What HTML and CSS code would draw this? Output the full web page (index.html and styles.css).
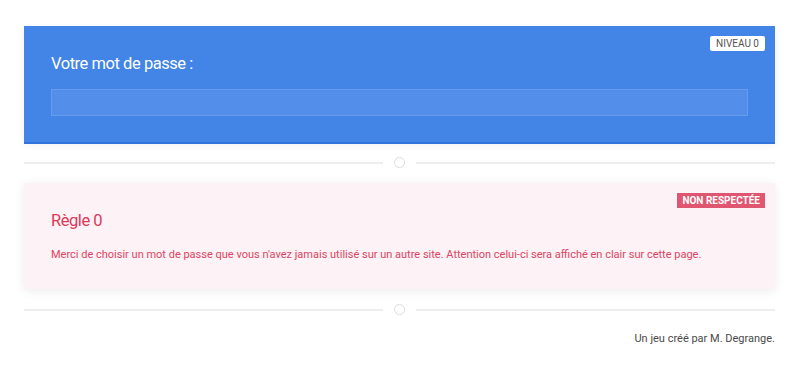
FILE: index.html
```html
<!DOCTYPE html>
<html lang="fr">
<head>
  <meta charset="UTF-8" />
  <meta name="viewport" content="width=device-width, initial-scale=1.0" />
  <title>Le jeu du mot de passe</title>
  <link rel="stylesheet" href="styles.css">
</head>
<body>

  <div class="page">
    <div class="carte carte-mdp">
      <span class="tag tag-niveau">NIVEAU 0</span>
      <label class="titre" for="mdp">Votre mot de passe :</label>
      <input id="mdp" class="champ" type="text" autocomplete="off">
    </div>

    <div class="separateur"><span class="rond"></span></div>

    <div class="carte carte-regle">
      <span class="tag tag-ko">NON RESPECTÉE</span>
      <h2 class="titre titre-regle">Règle 0</h2>
      <p class="texte-regle">Merci de choisir un mot de passe que vous n'avez jamais utilisé sur un autre site. Attention celui-ci sera affiché en clair sur cette page.</p>
    </div>

    <div class="separateur"><span class="rond"></span></div>

    <p class="pied">Un jeu créé par M. Degrange.</p>
  </div>

</body>
</html>
```

FILE: styles.css
```css
* {
  box-sizing: border-box;
}

body {
  margin: 0;
  background: #fff;
  font-family: Roboto, "Liberation Sans", sans-serif;
  color: #4a4a4a;
}

.page {
  padding: 26px 25px 0 24px;
}

.carte {
  position: relative;
  padding: 28px 27px 26px;
}

.carte-mdp {
  background: #4285e6;
  box-shadow: 0 2px 0 #2f74dc, 0 3px 8px rgba(0, 0, 0, 0.06);
}

.carte-regle {
  background: #fdf2f5;
  box-shadow: 0 2px 10px rgba(0, 0, 0, 0.08);
  padding: 28px 27px 26px;
}

.tag {
  position: absolute;
  top: 10px;
  right: 10px;
  height: 15px;
  padding: 0 6px;
  font-size: 10px;
  line-height: 15px;
}

.tag-niveau {
  background: #fff;
  color: #555;
  border-radius: 2px;
}

.tag-ko {
  background: #e05570;
  color: #fff;
  font-weight: 700;
  padding: 0 5px;
}

.titre {
  display: block;
  margin: 0;
  font-size: 16.5px;
  font-weight: 400;
  line-height: 20px;
  letter-spacing: -0.45px;
  color: #fff;
}

.champ {
  display: block;
  width: 100%;
  height: 27px;
  margin-top: 15px;
  background: #538fea;
  border: 1px solid #679ced;
  outline: none;
  color: #fff;
  font-family: inherit;
  font-size: 14px;
  padding: 0 8px;
}

.titre-regle {
  color: #d93a5c;
}

.texte-regle {
  margin: 16px 0 0;
  font-size: 11px;
  line-height: 16px;
  color: #df4463;
}

.separateur {
  display: flex;
  align-items: center;
  gap: 10px;
  height: 41px;
}

.separateur::before,
.separateur::after {
  content: "";
  flex: 1;
  height: 2px;
  background: #eeeeee;
}

.rond {
  width: 11px;
  height: 11px;
  border: 1.5px solid #dcdcdc;
  border-radius: 50%;
  margin: 0 1px;
}

.pied {
  margin: 2px 0 0;
  text-align: right;
  font-size: 11px;
  color: #4a4a4a;
}
```
